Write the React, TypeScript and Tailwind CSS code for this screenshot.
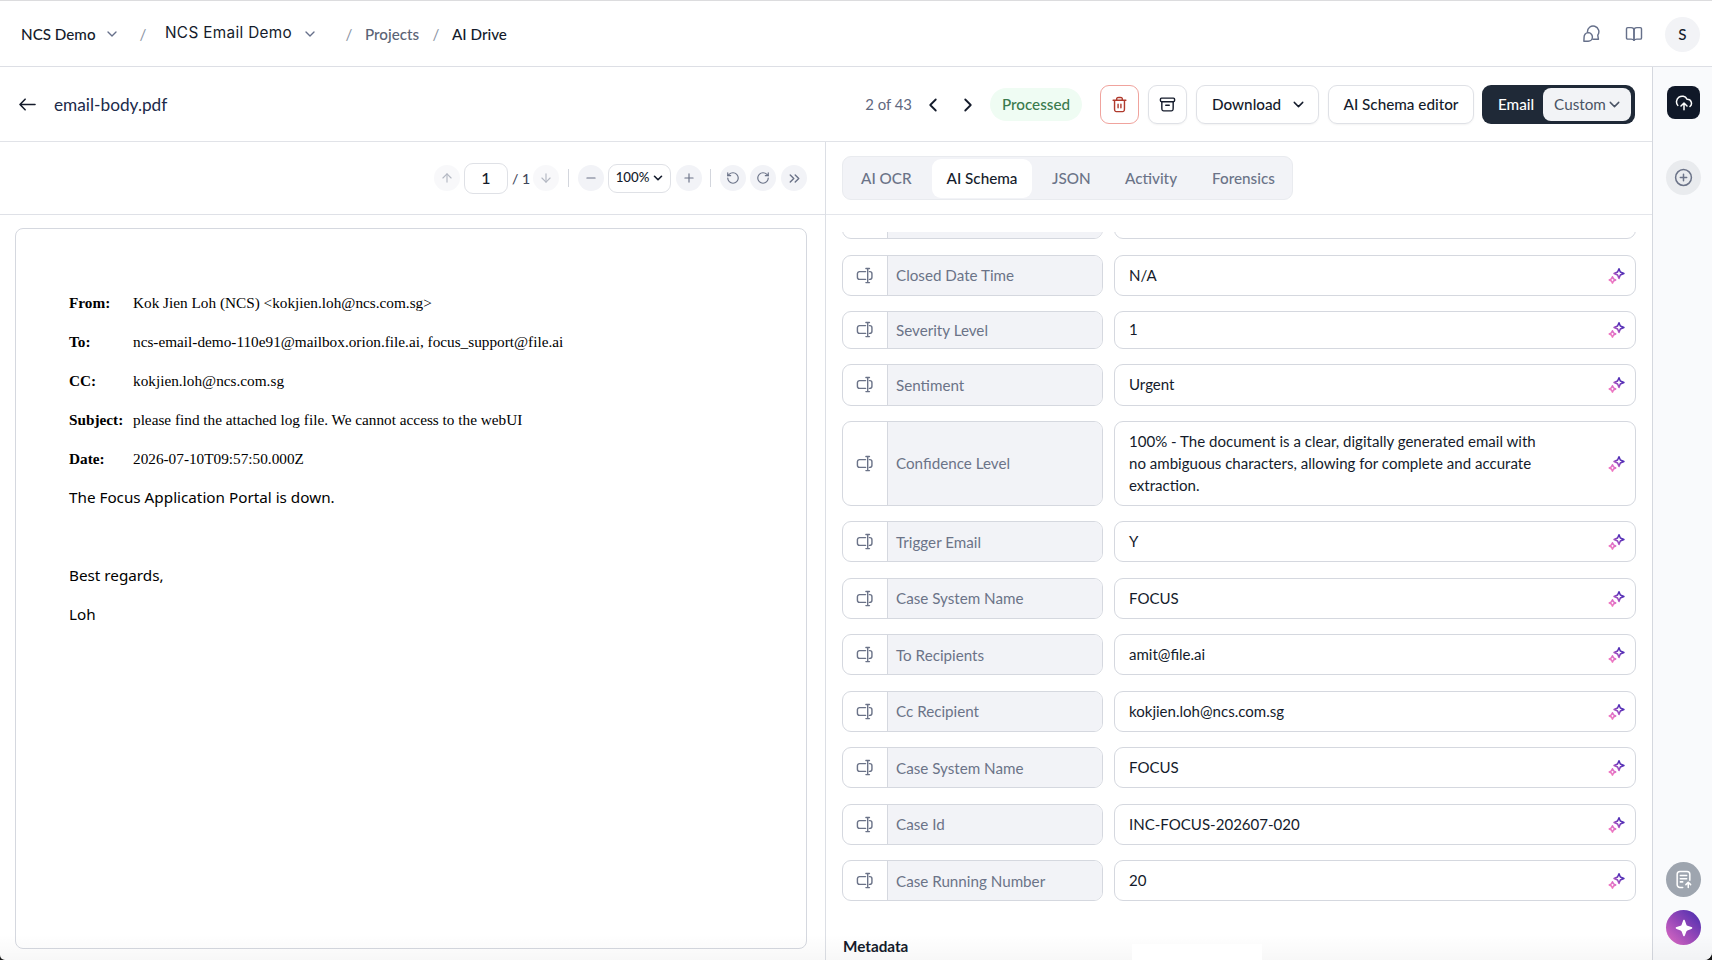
import type { ReactNode } from "react";
import {
  ArrowDown,
  ArrowUp,
  ChevronDown,
  ChevronLeft,
  ChevronRight,
  ChevronsRight,
  Minus,
  Plus,
  RotateCcw,
  RotateCw,
} from "lucide-react";

interface SchemaField {
  label: string;
  value: string;
  height: string;
}

const FIELDS: SchemaField[] = [
  { label: "Closed Date Time", value: "N/A", height: "h-[41px]" },
  { label: "Severity Level", value: "1", height: "h-[37.5px]" },
  { label: "Sentiment", value: "Urgent", height: "h-[41.5px]" },
  {
    label: "Confidence Level",
    value:
      "100% - The document is a clear, digitally generated email with no ambiguous characters, allowing for complete and accurate extraction.",
    height: "h-[84.5px]",
  },
  { label: "Trigger Email", value: "Y", height: "h-[41px]" },
  { label: "Case System Name", value: "FOCUS", height: "h-[41px]" },
  { label: "To Recipients", value: "amit@file.ai", height: "h-[41px]" },
  { label: "Cc Recipient", value: "kokjien.loh@ncs.com.sg", height: "h-[41px]" },
  { label: "Case System Name", value: "FOCUS", height: "h-[41px]" },
  { label: "Case Id", value: "INC-FOCUS-202607-020", height: "h-[41px]" },
  { label: "Case Running Number", value: "20", height: "h-[41px]" },
];

const EMAIL_HEADERS = [
  { name: "From:", value: "Kok Jien Loh (NCS) <kokjien.loh@ncs.com.sg>" },
  {
    name: "To:",
    value: "ncs-email-demo-110e91@mailbox.orion.file.ai, focus_support@file.ai",
  },
  { name: "CC:", value: "kokjien.loh@ncs.com.sg" },
  {
    name: "Subject:",
    value: "please find the attached log file. We cannot access to the webUI",
  },
  { name: "Date:", value: "2026-07-10T09:57:50.000Z" },
];

interface IconProps {
  className?: string;
}

const Icon = ({
  className,
  strokeWidth = 2,
  children,
}: IconProps & { strokeWidth?: number; children: ReactNode }) => (
  <svg
    viewBox="0 0 24 24"
    fill="none"
    stroke="currentColor"
    strokeWidth={strokeWidth}
    strokeLinecap="round"
    strokeLinejoin="round"
    className={className}
  >
    {children}
  </svg>
);

const BackIcon = ({ className }: IconProps) => (
  <Icon className={className}>
    <path d="M21.5 12h-19M9 5.3 2.5 12 9 18.7" />
  </Icon>
);

const ChatIcon = ({ className }: IconProps) => (
  <Icon className={className} strokeWidth={1.9}>
    <path d="M7.3 9.500A7.600 7.600 0 1 1 21 13.500l.9 5.400h-7.400" />
    <path d="M8.2 10.2a5.6 5.6 0 1 1 0 11.400H2.500l.3-5.600a5.600 5.600 0 0 1 5.400-5.800Z" />
  </Icon>
);

const BookIcon = ({ className }: IconProps) => (
  <Icon className={className} strokeWidth={1.9}>
    <path d="M12 20.5c-.8-1.3-1.9-1.7-3.8-1.7H3.6c-1 0-1.6-.6-1.6-1.6V5.1c0-1 .6-1.6 1.6-1.6h4.6c2.4 0 3.8 1.4 3.8 3.7Z" />
    <path d="M12 20.5c.8-1.3 1.9-1.7 3.8-1.7h4.6c1 0 1.6-.6 1.6-1.6V5.1c0-1-.6-1.6-1.6-1.6h-4.6c-2.4 0-3.8 1.4-3.8 3.7Z" />
  </Icon>
);

const TrashIcon = ({ className }: IconProps) => (
  <Icon className={className}>
    <path d="M16 6v-.8c0-1.1 0-1.7-.2-2.1a2 2 0 0 0-.9-.9C14.5 2 13.9 2 12.8 2h-1.6c-1.1 0-1.7 0-2.1.2a2 2 0 0 0-.9.9C8 3.5 8 4.1 8 5.2V6m2 5.5v5m4-5v5M3 6h18m-2 0v11.2c0 1.7 0 2.5-.3 3.2a3 3 0 0 1-1.3 1.3c-.7.3-1.5.3-3.2.3H9.8c-1.7 0-2.5 0-3.2-.3a3 3 0 0 1-1.3-1.3C5 19.7 5 18.9 5 17.2V6" />
  </Icon>
);

const ArchiveIcon = ({ className }: IconProps) => (
  <Icon className={className}>
    <rect x="2" y="3" width="20" height="5" rx="1.5" />
    <path d="M4 8v8.2c0 1.7 0 2.5.3 3.2a3 3 0 0 0 1.3 1.3c.7.3 1.5.3 3.2.3h6.4c1.7 0 2.5 0 3.2-.3a3 3 0 0 0 1.3-1.3c.3-.7.3-1.5.3-3.2V8M9.5 13h5" />
  </Icon>
);

const UploadCloudIcon = ({ className }: IconProps) => (
  <Icon className={className}>
    <path d="M8 16l4-4 4 4M12 12v9M20 16.7A5.5 5.5 0 0 0 16.5 7a.6.6 0 0 1-.5-.3A7.5 7.5 0 1 0 3.7 15.2" />
  </Icon>
);

const TextInputIcon = ({ className }: IconProps) => (
  <Icon className={className}>
    <path d="M13.5 6.5H5a3 3 0 0 0-3 3v5a3 3 0 0 0 3 3h8.5M14 2h5M14 22h5M16.5 2v20M19 6.5h.5a3 3 0 0 1 3 3v5a3 3 0 0 1-3 3H19" />
  </Icon>
);

const SparklesIcon = ({ className }: IconProps) => (
  <svg viewBox="0 0 24 24" fill="none" className={className}>
    <defs>
      <linearGradient
        id="sparkle"
        x1="3"
        y1="21"
        x2="18"
        y2="4"
        gradientUnits="userSpaceOnUse"
      >
        <stop stopColor="#f279c0" />
        <stop offset="0.4" stopColor="#d66ac8" />
        <stop offset="0.75" stopColor="#6a35b8" />
        <stop offset="1" stopColor="#4c2db5" />
      </linearGradient>
    </defs>
    <g stroke="url(#sparkle)" strokeWidth="2.2" strokeLinejoin="round">
      <path d="M15.5 2.5 17.4 7.1 22.5 9.2 17.4 11.3 15.5 16 13.5 11.3 8.5 9.2 13.5 7.1Z" />
      <path d="M6.3 13.8 7.8 16.8 10.8 18.3 7.8 19.8 6.3 22.8 4.8 19.8 1.8 18.3 4.8 16.8Z" />
    </g>
  </svg>
);

const NoteUploadIcon = ({ className }: IconProps) => (
  <Icon className={className} strokeWidth={1.9}>
    <path d="M11 22H7.500a3.500 3.500 0 0 1-3.500-3.500v-13A3.500 3.500 0 0 1 7.500 2h9A3.500 3.500 0 0 1 20 5.500V13M8 7h8M8 11h8M8 15h3M18 22v-6M15 18.500l3-3 3 3" />
  </Icon>
);

const Separator = () => (
  <span className="flex w-[6px] shrink-0 justify-center text-[#8b93a3]">/</span>
);

const TopBar = () => (
  <header className="flex h-[67px] shrink-0 items-center border-t border-b border-t-[#dcdcde] border-b-[#dddfe5] pt-px pr-[12px] pl-[21px] text-[15.2px] text-[#141b2b]">
    <div className="flex w-[119px] items-center font-medium">
      <span className="w-[83px] pt-px">NCS Demo</span>
      <ChevronDown className="size-[16px] text-[#66708a]" />
    </div>
    <Separator />
    <div className="flex w-[200px] items-center pl-[19px]">
      <span className="w-[137px] pb-[1px] font-['Inter',sans-serif] text-[15.3px] tracking-[0.35px]">
        NCS Email Demo
      </span>
      <ChevronDown className="size-[16px] text-[#66708a]" />
    </div>
    <Separator />
    <span className="w-[81px] pt-px pl-[13px] font-medium text-[#5b6475]">
      Projects
    </span>
    <Separator />
    <span className="pt-px pl-[13px] font-medium">AI Drive</span>
    <div className="ml-auto flex items-center text-[#66708a]">
      <ChatIcon className="mr-[25px] size-[18px]" />
      <BookIcon className="mr-[22px] size-[18px]" />
      <span className="flex size-[35px] items-center justify-center rounded-full bg-[#f2f3f6] font-medium text-[#141b2b]">
        S
      </span>
    </div>
  </header>
);

const ActionBar = () => (
  <div className="flex h-[75px] shrink-0 items-center border-b border-[#e1e3e8] pt-px pr-[17px] pl-[18px] text-[15.250px] text-[#141b2b]">
    <BackIcon className="size-[19px]" />
    <span className="pl-[17px] text-[17.250px] text-[#202a4a]">
      email-body.pdf
    </span>
    <span className="ml-auto text-[14.900px] text-[#5f6880]">2 of 43</span>
    <ChevronLeft className="ml-[10px] size-[22px]" />
    <ChevronRight className="ml-[13px] size-[22px]" />
    <span className="ml-[11px] flex h-[33px] w-[92px] items-center justify-center rounded-full bg-[#effcf3] font-medium text-[#3a7a4d]">
      Processed
    </span>
    <button className="ml-[18px] flex size-[39px] items-center justify-center rounded-[9px] border border-[#f0a39d] text-[#b03a2c]">
      <TrashIcon className="size-[17px]" />
    </button>
    <button className="ml-[9px] flex size-[39px] items-center justify-center rounded-[9px] border border-[#dfe1e6] shadow-xs">
      <ArchiveIcon className="size-[17px]" />
    </button>
    <button className="ml-[9px] flex h-[39px] w-[123px] items-center justify-between rounded-[9px] border border-[#dfe1e6] pr-[11px] pl-[15px] font-medium shadow-xs">
      Download
      <ChevronDown className="size-[17px]" />
    </button>
    <button className="ml-[9px] h-[39px] w-[146px] rounded-[9px] border border-[#dfe1e6] font-medium shadow-xs">
      AI Schema editor
    </button>
    <div className="ml-[8px] flex h-[39px] w-[153px] items-center justify-between rounded-[9px] bg-[#1f2937] pr-[4px] pl-[16px] text-white">
      <span className="font-medium">Email</span>
      <button className="flex h-[33px] w-[88px] items-center justify-center rounded-[8px] bg-[#f2f3f6] pl-[3px] text-[#4a5364]">
        Custom
        <ChevronDown className="size-[17px]" />
      </button>
    </div>
  </div>
);

const ToolButton = ({
  disabled,
  className = "",
  children,
}: {
  disabled?: boolean;
  className?: string;
  children: ReactNode;
}) => (
  <button
    className={`flex size-[26px] shrink-0 items-center justify-center rounded-full bg-[#f2f3f7] text-[#6b7388] ${
      disabled ? "opacity-50" : ""
    } ${className}`}
  >
    {children}
  </button>
);

const DocumentViewer = () => (
  <section className="flex w-[826px] shrink-0 flex-col border-r border-[#dcdfe5]">
    <div className="flex h-[73px] shrink-0 items-center justify-end border-b border-[#dfe1e7] pr-[18px] text-[#141b2b]">
      <ToolButton disabled>
        <ArrowUp className="size-[14px]" />
      </ToolButton>
      <span className="ml-[4px] flex h-[31px] w-[44px] items-center justify-center rounded-[9px] border border-[#dfe1e6] text-[16px] font-medium">
        1
      </span>
      <span className="ml-[4px] w-[21px] text-[14px] font-medium text-[#3f485a]">
        / 1
      </span>
      <ToolButton disabled>
        <ArrowDown className="size-[14px]" />
      </ToolButton>
      <span className="ml-[9px] h-[18px] w-px bg-[#d3d6dd]" />
      <ToolButton className="ml-[9px]">
        <Minus className="size-[14px]" />
      </ToolButton>
      <span className="ml-[4px] flex h-[29px] w-[63px] items-center justify-center gap-[2px] rounded-[9px] border border-[#dfe1e6] pl-[2px] text-[13.250px] font-medium">
        100%
        <ChevronDown className="size-[14px]" strokeWidth={2.8} />
      </span>
      <ToolButton className="ml-[5px]">
        <Plus className="size-[14px]" />
      </ToolButton>
      <span className="ml-[8px] h-[18px] w-px bg-[#d3d6dd]" />
      <ToolButton className="ml-[9px]">
        <RotateCcw className="size-[14px]" />
      </ToolButton>
      <ToolButton className="ml-[4px]">
        <RotateCw className="size-[14px]" />
      </ToolButton>
      <ToolButton className="ml-[5px]">
        <ChevronsRight className="size-[17px]" />
      </ToolButton>
    </div>
    <div className="mt-[13px] mr-[18px] ml-[15px] h-[721px] rounded-[8px] border border-[#d5d8df] pt-[55px] pl-[53px] text-black">
      <div className="font-['Liberation_Serif',serif] text-[15.270px]">
        {EMAIL_HEADERS.map(({ name, value }) => (
          <div key={name} className="flex h-[39.100px] items-center">
            <span className="w-[64px] font-bold">{name}</span>
            <span className="whitespace-nowrap">{value}</span>
          </div>
        ))}
      </div>
      <div className="-mt-[2px] font-['Noto_Sans',sans-serif] text-[15.250px]">
        <p className="flex h-[39px] items-center">
          The Focus Application Portal is down.
        </p>
        <p className="mt-[39px] flex h-[39px] items-center">Best regards,</p>
        <p className="flex h-[39px] items-center">Loh</p>
      </div>
    </div>
  </section>
);

const FieldRow = ({ label, value, height }: SchemaField) => (
  <div className={`flex shrink-0 gap-[11px] ${height}`}>
    <div className="flex w-[261px] shrink-0 overflow-hidden rounded-[9px] border border-[#d5d8df]">
      <div className="flex w-[45px] items-center justify-center border-r border-[#d5d8df] text-[#6b7388]">
        <TextInputIcon className="mr-px size-[17px]" />
      </div>
      <div className="flex flex-1 items-center bg-[#f2f3f7] pt-px pl-[8px] text-[15.200px] text-[#6b7388]">
        {label}
      </div>
    </div>
    <div className="flex w-[522px] items-center justify-between rounded-[9px] border border-[#d5d8df] pr-[10px] pl-[14px] text-[15.050px] text-[#141b2b]">
      <span className="w-[420px] pt-px leading-[21.800px]">{value}</span>
      <SparklesIcon className="size-[17px]" />
    </div>
  </div>
);

const SchemaPanel = () => (
  <section className="flex min-w-0 flex-1 flex-col">
    <div className="flex h-[73px] shrink-0 items-center border-b border-[#e4e6eb] pl-[16px]">
      <nav className="flex h-[44px] w-[451px] items-center rounded-[9px] border border-[#e9ebef] bg-[#f2f3f7] text-[15.250px] font-medium text-[#6b7388]">
        <span className="w-[89px] pl-[18px]">AI OCR</span>
        <span className="flex h-[39px] w-[100px] items-center justify-center rounded-[9px] bg-white text-[#141b2b]">
          AI Schema
        </span>
        <span className="ml-[20px] w-[73px]">JSON</span>
        <span className="w-[87px]">Activity</span>
        <span>Forensics</span>
      </nav>
    </div>
    <div className="mt-[17px] flex min-h-0 flex-1 flex-col overflow-hidden pl-[16px]">
      <div className="flex h-[7px] shrink-0 items-end gap-[11px] overflow-hidden">
        <div className="flex h-[41px] w-[261px] shrink-0 overflow-hidden rounded-[9px] border border-[#d5d8df]">
          <div className="w-[45px] border-r border-[#d5d8df]" />
          <div className="flex-1 bg-[#f2f3f7]" />
        </div>
        <div className="h-[41px] w-[522px] rounded-[9px] border border-[#d5d8df]" />
      </div>
      <div className="mt-[15.500px] flex flex-col gap-[15.500px]">
        {FIELDS.map((field, index) => (
          <FieldRow key={index} {...field} />
        ))}
      </div>
      <h2 className="mt-[34px] pl-px text-[15.250px] font-bold text-[#141b2b]">
        Metadata
      </h2>
    </div>
  </section>
);

const SideRail = () => (
  <aside className="flex w-[60px] shrink-0 flex-col items-center border-l border-[#d5d8df] bg-[#f9fafc] pt-[19px] pb-[15px] pl-[2px]">
    <button className="flex size-[33px] items-center justify-center rounded-[8px] bg-[#101828] text-white">
      <UploadCloudIcon className="size-[18px]" />
    </button>
    <button className="mt-[41px] flex size-[35px] items-center justify-center rounded-full bg-[#e9ebee] text-[#6b7388]">
      <Icon className="size-[19px]" strokeWidth={1.9}>
        <circle cx="12" cy="12" r="10" />
        <path d="M12 8v8M8 12h8" />
      </Icon>
    </button>
    <button className="mt-auto flex size-[35px] items-center justify-center rounded-full bg-[#9ea5af] text-white">
      <NoteUploadIcon className="size-[19px]" />
    </button>
    <button className="mt-[13px] flex size-[35px] items-center justify-center rounded-full bg-linear-to-tr from-[#e26bc2] via-[#9546b8] to-[#4527ad] text-white">
      <svg viewBox="0 0 24 24" fill="currentColor" className="size-[18px]">
        <path d="M12 1c.8 0 1 .5 1.300 1.300l1.900 5.200c.3.800.6 1.100 1.400 1.400l5.200 1.900c.8.300 1.300.5 1.300 1.200s-.5 1-1.300 1.300l-5.200 1.900c-.8.300-1.100.6-1.400 1.400l-1.900 5.200c-.3.800-.5 1.300-1.300 1.300s-1-.5-1.300-1.300l-1.900-5.200c-.3-.8-.6-1.100-1.400-1.400l-5.200-1.900C1.400 13 .9 12.700.9 12s.5-.9 1.300-1.200l5.200-1.900c.8-.3 1.100-.6 1.400-1.400l1.900-5.200C11 1.500 11.200 1 12 1Z" />
      </svg>
    </button>
  </aside>
);

export default function App() {
  return (
    <div className="h-[960px] w-[1712px] bg-[#1a1a1a]">
      <div className="relative flex h-full flex-col overflow-hidden rounded-br-[8px] rounded-bl-[5px] bg-white font-['Lato',sans-serif]">
        <TopBar />
        <div className="flex min-h-0 flex-1">
          <main className="flex w-[1652px] shrink-0 flex-col">
            <ActionBar />
            <div className="flex min-h-0 flex-1">
              <DocumentViewer />
              <SchemaPanel />
            </div>
          </main>
          <SideRail />
        </div>
        <div className="pointer-events-none absolute inset-x-0 bottom-0 h-[26px] bg-linear-to-b from-black/0 to-black/3" />
        <div className="absolute bottom-0 left-[1132px] h-[16px] w-[130px] bg-white" />
      </div>
    </div>
  );
}
